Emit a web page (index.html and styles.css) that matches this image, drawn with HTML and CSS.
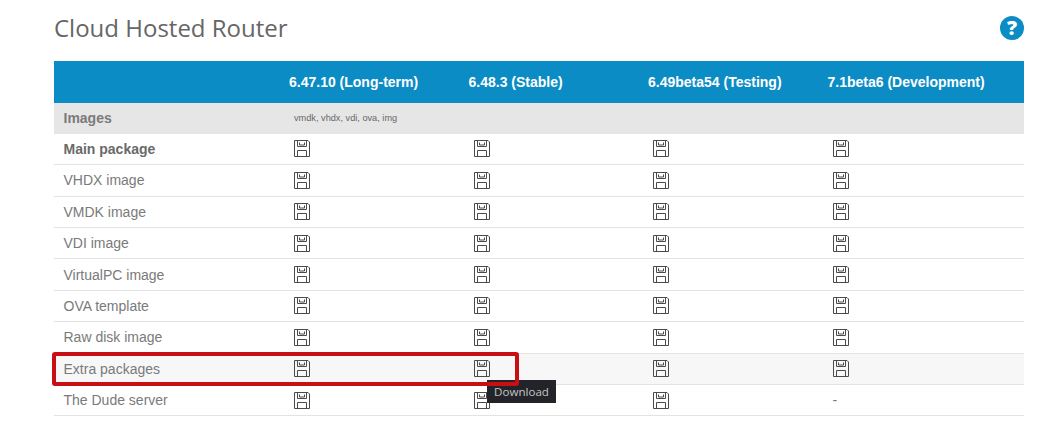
FILE: index.html
```html
<!DOCTYPE html>
<html lang="en">
<head>
<meta charset="utf-8">
<title>Cloud Hosted Router</title>
<link rel="stylesheet" href="styles.css">
</head>
<body>
<svg class="defs" width="0" height="0" aria-hidden="true">
  <symbol id="disk" viewBox="0 0 16 17">
    <path d="M.5.5H14L15.5 2V16.5H.5Z M3.5 .5V6.5H12.5V.5 M5.5 2.5V5H10.5V2.5 M3.5 16.5V10.5H12.5V16.5" fill="none" stroke="#4a4a4a" stroke-width="1"/>
  </symbol>
</svg>
<main class="page">
  <header class="head">
    <h1 class="title">Cloud Hosted Router</h1>
    <span class="help">?</span>
  </header>
  <div class="wrap">
    <table class="grid">
      <colgroup>
        <col class="c0"><col class="c1"><col class="c1"><col class="c1"><col class="c4">
      </colgroup>
      <thead>
        <tr class="top">
          <th></th>
          <th>6.47.10 (Long-term)</th>
          <th>6.48.3 (Stable)</th>
          <th>6.49beta54 (Testing)</th>
          <th>7.1beta6 (Development)</th>
        </tr>
      </thead>
      <tbody>
        <tr class="section"><td>Images</td><td class="exts" colspan="4">vmdk, vhdx, vdi, ova, img</td></tr>
        <tr class="main"><td>Main package</td><td><svg class="ic"><use href="#disk"/></svg></td><td><svg class="ic"><use href="#disk"/></svg></td><td><svg class="ic"><use href="#disk"/></svg></td><td><svg class="ic"><use href="#disk"/></svg></td></tr>
        <tr><td>VHDX image</td><td><svg class="ic"><use href="#disk"/></svg></td><td><svg class="ic"><use href="#disk"/></svg></td><td><svg class="ic"><use href="#disk"/></svg></td><td><svg class="ic"><use href="#disk"/></svg></td></tr>
        <tr><td>VMDK image</td><td><svg class="ic"><use href="#disk"/></svg></td><td><svg class="ic"><use href="#disk"/></svg></td><td><svg class="ic"><use href="#disk"/></svg></td><td><svg class="ic"><use href="#disk"/></svg></td></tr>
        <tr><td>VDI image</td><td><svg class="ic"><use href="#disk"/></svg></td><td><svg class="ic"><use href="#disk"/></svg></td><td><svg class="ic"><use href="#disk"/></svg></td><td><svg class="ic"><use href="#disk"/></svg></td></tr>
        <tr><td>VirtualPC image</td><td><svg class="ic"><use href="#disk"/></svg></td><td><svg class="ic"><use href="#disk"/></svg></td><td><svg class="ic"><use href="#disk"/></svg></td><td><svg class="ic"><use href="#disk"/></svg></td></tr>
        <tr><td>OVA template</td><td><svg class="ic"><use href="#disk"/></svg></td><td><svg class="ic"><use href="#disk"/></svg></td><td><svg class="ic"><use href="#disk"/></svg></td><td><svg class="ic"><use href="#disk"/></svg></td></tr>
        <tr><td>Raw disk image</td><td><svg class="ic"><use href="#disk"/></svg></td><td><svg class="ic"><use href="#disk"/></svg></td><td><svg class="ic"><use href="#disk"/></svg></td><td><svg class="ic"><use href="#disk"/></svg></td></tr>
        <tr class="hover"><td>Extra packages</td><td><svg class="ic"><use href="#disk"/></svg></td><td><svg class="ic"><use href="#disk"/></svg></td><td><svg class="ic"><use href="#disk"/></svg></td><td><svg class="ic"><use href="#disk"/></svg></td></tr>
        <tr><td>The Dude server</td><td><svg class="ic"><use href="#disk"/></svg></td><td><svg class="ic"><use href="#disk"/></svg></td><td><svg class="ic"><use href="#disk"/></svg></td><td>-</td></tr>
      </tbody>
    </table>
    <div class="tip">Download</div>
    <div class="mark"></div>
  </div>
</main>
</body>
</html>
```

FILE: styles.css
```css
html, body { margin: 0; padding: 0; background: #fff; }
body { width: 1053px; height: 423px; overflow: hidden; font-family: "Liberation Sans", Arial, sans-serif; color: #7a7a7a; }
.defs { position: absolute; }
.page { padding: 0 29px 0 54px; }
.head { display: flex; justify-content: space-between; align-items: flex-start; height: 61px; }
.title { margin: 11px 0 0; font: 400 24px/33px "Open Sans", sans-serif; color: #666; }
.help { width: 24px; height: 24px; margin-top: 16px; border-radius: 50%; background: #0b8cc4; color: #fff; font: 800 20px/24px "Open Sans", sans-serif; text-align: center; }
.wrap { position: relative; width: 970px; }
.grid { width: 970px; table-layout: fixed; border-collapse: separate; border-spacing: 0; font-size: 14px; }
.c0 { width: 230.5px; }
.c1 { width: 179.5px; }
.c4 { width: 201px; }
.top th { height: 42px; padding: 0 0 0 4.5px; background: #0b8cc4; color: #fff; font-size: 14px; font-weight: 700; text-align: left; vertical-align: middle; }
td { height: 31.4px; box-sizing: border-box; padding: 0 9.5px; border-bottom: 1px solid #e3e3e3; vertical-align: middle; line-height: 16px; }
.ic { display: block; width: 16px; height: 17px; }
.section td { height: 30.8px; background: #e6e6e6; border-bottom: 0; font-weight: 700; }
.section .exts { font-size: 9.2px; font-weight: 400; color: #666; }
.main td:first-child { font-weight: 700; color: #6a6a6a; }
.hover td { background: #f7f7f7; }
.mark { position: absolute; left: -2px; top: 291px; width: 459px; height: 26px; border: 4px solid #c80f14; border-radius: 3px; }
.tip { position: absolute; left: 433px; top: 319px; width: 69px; height: 23px; background: #23242a; color: #c4c4c4; font: 11.6px/23px "Open Sans", sans-serif; text-align: center; }
```
